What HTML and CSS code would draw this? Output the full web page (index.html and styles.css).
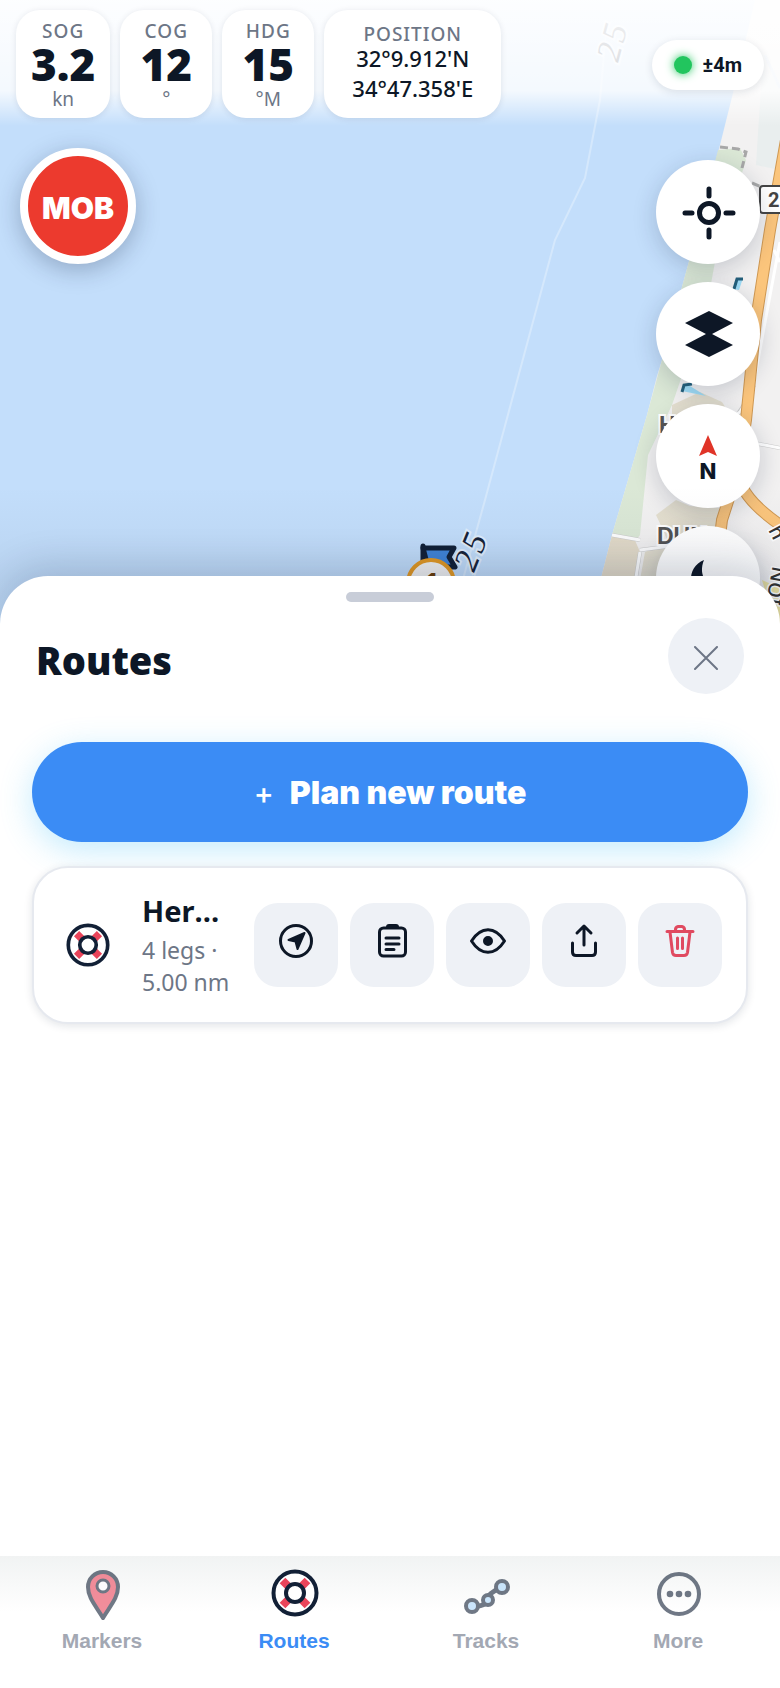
FILE: index.html
```html
<!DOCTYPE html>
<html lang="en">
<head>
<meta charset="utf-8">
<meta name="viewport" content="width=device-width, initial-scale=1">
<title>Routes</title>
<link rel="stylesheet" href="styles.css">
</head>
<body>
<svg class="defs" aria-hidden="true">
  <symbol id="ring" viewBox="0 0 48 48">
    <circle cx="24" cy="24" r="21" fill="#fff"/>
    <path d="M11.500 11.500 36.500 36.500M36.500 11.500 11.500 36.500" stroke="#ea445a" stroke-width="8"/>
    <circle cx="24" cy="24" r="21.500" fill="none" stroke="#122036" stroke-width="4"/>
    <circle cx="24" cy="24" r="9" fill="#fff" stroke="#122036" stroke-width="4"/>
  </symbol>
</svg>
<div class="app">
  <main class="stage">
    <svg class="map" viewBox="0 0 780 660" preserveAspectRatio="xMaxYMin slice" aria-hidden="true">
      <rect width="780" height="660" fill="#c3defb"/>
      <path d="M606 30 600 100 585 178 555 240 485 500 460 590" fill="none" stroke="#d5e8fc" stroke-width="2"/>
      <path d="M755 0 733 93 720 145 688 265 662 360 657 376 647 415 612 535 598 590 590 660H780V0Z" fill="#f2f1f1"/>
      <path d="M762 70H780V170L756 165Z" fill="#e9eeee"/>
      <path d="M718 150 740 148 746 160 715 262 708 300 672 405 648 455 640 535 632 545 612 535 647 415 662 360 688 265Z" fill="#dbe8d6"/>
      <path d="M612 535 634 538 640 552 636 590H598Z" fill="#e4dcca"/>
      <path d="M672 405 700 392 722 402 740 430 700 460 672 440Z" fill="#e4dfcf"/>
      <path d="M676 500 690 506 719 508 716 580H640L645 552 668 543 664 532 656 515Z" fill="#e4dfcf"/>
      <path d="M720 147 738 149 746 152 742 168M752 183 764 188" fill="none" stroke="#a8a8a8" stroke-width="3" stroke-dasharray="8 4"/>
      <path d="M765 55 780 88" stroke="#d8e5f5" stroke-width="3"/>
      <path d="M754 385 742 408 730 425M754 443 780 448M640 550 716 540M612 535 640 540M640 552 634 590" fill="none" stroke="#ccc" stroke-width="4"/>
      <path d="M780 242 752 392 740 412 718 425M754 443 780 448M640 550 716 540M612 535 640 540M640 552 634 590M774 250 780 262" fill="none" stroke="#fff" stroke-width="3"/>
      <path d="M786 140 770 230 756 320 746 420 738 470 722 520 712 600M742 486Q752 508 794 534" fill="none" stroke="#cf9852" stroke-width="12"/>
      <path d="M786 140 770 230 756 320 746 420 738 470 722 520 712 600M742 486Q752 508 794 534" fill="none" stroke="#fbc57c" stroke-width="10"/>
      <path d="M736 279 743 278 739 290 733 289Z" fill="#9fdcf6"/>
      <path d="M734 289 737 279 743 279" fill="none" stroke="#24607c" stroke-width="3"/>
      <path d="M684 384 690 386 706 396 682 391Z" fill="#9fdcf6"/>
      <path d="M682 392 684 385 692 384" fill="none" stroke="#24607c" stroke-width="3"/>
      <path d="M762 580 780 588V640Z" fill="#efe6a5"/>
      <g><rect x="760" y="186" width="34" height="27" rx="3" fill="#fff" stroke="#444" stroke-width="2"/><text x="768" y="207" class="road-no">2</text></g>
      <text class="place" x="659" y="433">Herzliya</text>
      <text class="place" x="657" y="544">DUN</text>
      <text class="street" transform="translate(768 530) rotate(62)">h</text>
      <text class="street" transform="translate(780 606) rotate(-80)">ION</text>
      <text class="depth" transform="translate(618 63) rotate(-75)">25</text>
      <text class="depth" transform="translate(474 573) rotate(-68)">25</text>
      <path d="M423 548H454L449 557 455 567H428Z" fill="#4185d9" stroke="#122036" stroke-width="5" stroke-linejoin="round"/>
      <path d="M423 546V590" stroke="#122036" stroke-width="5" stroke-linecap="round"/>
      <circle cx="431" cy="583" r="23" fill="#f3f3f3" stroke="#e59a22" stroke-width="4"/>
      <text class="stop" x="424" y="592">1</text>
    </svg>
    <div class="veil"></div>
    <div class="shade"></div>
    <header class="topbar">
      <dl class="readouts">
        <div class="chip"><dt>SOG</dt><dd class="value">3.2</dd><dd class="unit">kn</dd></div>
        <div class="chip"><dt>COG</dt><dd class="value">12</dd><dd class="unit">°</dd></div>
        <div class="chip"><dt>HDG</dt><dd class="value">15</dd><dd class="unit">°M</dd></div>
        <div class="chip position"><dt>POSITION</dt><dd class="coord">32°9.912'N</dd><dd class="coord">34°47.358'E</dd></div>
      </dl>
      <div class="gps"><span class="dot"></span>±4m</div>
    </header>
    <div class="controls">
      <button class="mob" type="button">MOB</button>
      <div class="tools">
        <button class="tool" type="button" aria-label="Center on my position">
          <svg width="56" height="56" viewBox="0 0 56 56" fill="none" stroke="#0d1726" stroke-width="5" stroke-linecap="round"><circle cx="29" cy="29" r="9.500"/><path d="M29 5V12M29 46V53M5 29H12M46 29H53"/></svg>
        </button>
        <button class="tool" type="button" aria-label="Layers">
          <svg width="56" height="56" viewBox="0 0 56 56" fill="#0d1726"><path d="M29 5 53 17 32 28 53 39 29 51 5 39 26 28 5 17Z"/></svg>
        </button>
        <button class="tool north" type="button">
          <svg width="18" height="22" viewBox="0 0 18 22" fill="#e03428" aria-hidden="true"><path d="M9 0 18 21 9 17 0 21Z"/></svg>N
        </button>
        <button class="tool" type="button" aria-label="Night mode">
          <svg width="56" height="56" viewBox="0 0 56 56" fill="#0d1726"><path d="M24 10C6 17 6 44 28 48 38 49 44 44 47 37 29 41 17 27 24 10Z"/></svg>
        </button>
      </div>
    </div>
  </main>

  <section class="sheet" aria-labelledby="sheet-title">
    <div class="handle"></div>
    <div class="sheet-head">
      <h1 id="sheet-title">Routes</h1>
      <button class="close" type="button" aria-label="Close">
        <svg width="24" height="24" viewBox="0 0 24 24" stroke="#6d7686" stroke-width="2" stroke-linecap="round"><path d="M1 1 23 23M23 1 1 23"/></svg>
      </button>
    </div>
    <button class="plan" type="button"><span class="plus">+</span>Plan new route</button>
    <article class="route">
      <svg class="route-icon" width="44" height="44" aria-hidden="true"><use href="#ring"/></svg>
      <div class="route-text">
        <h2>Herzliya Marina loop</h2>
        <p>4 legs · 5.00 nm</p>
      </div>
      <div class="actions">
        <button type="button" aria-label="Navigate"><svg viewBox="0 0 40 40"><circle cx="20" cy="20" r="15.500"/><path class="solid" d="M28.500 12 21.500 28 19.500 20.500 12.500 19Z"/></svg></button>
        <button type="button" aria-label="Details"><svg viewBox="0 0 40 40"><rect x="7.500" y="7" width="26" height="28" rx="4"/><path class="solid" d="M15 7V6Q15 4 17 4H24Q26 4 26 6V7Z"/><path d="M14 17H27M14 23H27M14 28.500H22"/></svg></button>
        <button type="button" aria-label="Show on map"><svg viewBox="0 0 40 40"><path d="M3.500 20C13 5 27 5 36.500 20 27 35 13 35 3.500 20Z"/><circle class="solid" cx="20" cy="20" r="4"/></svg></button>
        <button type="button" aria-label="Share"><svg viewBox="0 0 40 40"><path d="M20 24V6M13 12 20 5 27 12M8.500 22V31Q8.500 34.500 12 34.500H28Q31.500 34.500 31.500 31V22"/></svg></button>
        <button class="danger" type="button" aria-label="Delete"><svg viewBox="0 0 40 40"><path d="M7 10.500H33M10 11 12.500 31.500Q13 34.500 16 34.500H24Q27 34.500 27.500 31.500L30 11M15.500 10Q15 6 18 5.500H22Q25 6 24.500 10M17.500 17V27.500M22.500 17V27.500"/></svg></button>
      </div>
    </article>
  </section>

  <nav class="tabs">
    <a href="#markers"><svg class="muted" width="52" height="52" viewBox="0 0 52 52"><path d="M27 50C20 38 12 30 12 19A15 15 0 0 1 42 19C42 30 34 38 27 50Z" fill="#ea445a" stroke="#122036" stroke-width="4" stroke-linejoin="round"/><circle cx="27" cy="18" r="6" fill="#fff" stroke="#122036" stroke-width="3"/></svg>Markers</a>
    <a class="active" href="#routes" aria-current="page"><svg width="52" height="52" viewBox="-3 -1 52 52"><use href="#ring" width="48" height="48"/></svg>Routes</a>
    <a href="#tracks"><svg class="muted" width="52" height="52" viewBox="0 0 52 52" fill="#a9d6fb" stroke="#122036" stroke-width="4"><path d="M12 38Q26 39 27 32T42 19" fill="none" stroke-width="5"/><circle cx="12" cy="38" r="6"/><circle cx="28" cy="32" r="5"/><circle cx="42" cy="19" r="6"/></svg>Tracks</a>
    <a href="#more"><svg class="muted" width="52" height="52" viewBox="0 0 52 52" fill="none" stroke="#122036" stroke-width="4"><circle cx="27" cy="26" r="20"/><g fill="#122036" stroke="none"><circle cx="18" cy="26" r="3.300"/><circle cx="27" cy="26" r="3.300"/><circle cx="36" cy="26" r="3.300"/></g></svg>More</a>
  </nav>
</div>
</body>
</html>
```
FILE: styles.css
```css
* { box-sizing: border-box; }
body { margin: 0; font-family: "Noto Sans", "Open Sans", sans-serif; color: #0d1726; background: #fff; }
button { border: 0; padding: 0; font: inherit; color: inherit; cursor: pointer; }
h1, h2, p, dl, dd { margin: 0; }
.defs { position: absolute; width: 0; height: 0; }
.app { display: flex; flex-direction: column; height: 100vh; overflow: hidden; }

.stage { position: relative; flex: 1; min-height: 0; }
.map { position: absolute; top: 0; left: 0; width: 100%; height: 660px; }
.veil { position: absolute; top: 0; left: 0; right: 0; height: 126px; background: linear-gradient(rgba(255,255,255,.96), rgba(255,255,255,.82) 72%, rgba(255,255,255,0)); }
.shade { position: absolute; z-index: 2; left: 0; right: 0; bottom: -60px; height: 150px; pointer-events: none; background: linear-gradient(rgba(13,30,60,0), rgba(13,30,60,.05) 60%); }
.place { font: 700 23px "Liberation Sans", sans-serif; fill: #555; stroke: #fff; stroke-width: 4px; paint-order: stroke; }
.street { font: 500 20px "Noto Sans", sans-serif; fill: #333; stroke: #fff; stroke-width: 3px; paint-order: stroke; }
.road-no { font: 700 20px Roboto, sans-serif; fill: #444; }
.depth { font: italic 34px "Liberation Serif", serif; fill: #172338; stroke: #e0effd; stroke-width: 4px; paint-order: stroke; letter-spacing: 3px; }
.stop { font: 800 26px "Noto Sans", sans-serif; fill: #6b3c08; }

.topbar { position: relative; display: flex; justify-content: space-between; align-items: flex-start; padding: 10px 16px 0; }
.readouts { display: flex; gap: 10px; }
.chip { display: flex; flex-direction: column; align-items: center; justify-content: center; min-width: 92px; height: 108px; padding: 4px 15px 0; border-radius: 24px; background: #fff; box-shadow: 0 1px 6px rgba(13,30,60,.1); text-align: center; }
.chip dt { font-size: 19px; line-height: 22px; font-weight: 500; letter-spacing: 1px; color: #6d7686; }
.value { font-size: 44px; line-height: 44px; font-weight: 900; }
.unit { font-size: 19px; line-height: 26px; color: #6d7686; }
.chip.position { padding: 0 28px; }
.coord { font-size: 22px; line-height: 30px; font-weight: 500; }
.position dt { line-height: 18px; }
.gps { display: flex; align-items: center; gap: 10px; margin-top: 30px; height: 50px; padding: 0 22px; border-radius: 25px; background: #fff; box-shadow: 0 2px 8px rgba(13,30,60,.12); font: 700 20px Roboto, sans-serif; }
.dot { width: 18px; height: 18px; border-radius: 50%; background: #22c55e; box-shadow: 0 0 10px #22c55e; }

.controls { position: relative; display: flex; justify-content: space-between; align-items: flex-start; padding: 30px 20px 0; }
.mob { width: 116px; height: 116px; padding-top: 4px; border: 8px solid #fff; border-radius: 50%; background: #ec3a2e; color: #fff; font: 900 30px Inter, sans-serif; box-shadow: 0 6px 24px rgba(13,30,60,.28); }
.tools { display: flex; flex-direction: column; gap: 18px; padding-top: 12px; }
.tool { display: flex; align-items: center; justify-content: center; width: 104px; height: 104px; border-radius: 50%; background: #fff; box-shadow: 0 6px 24px rgba(13,30,60,.2); }
.north { flex-direction: column; gap: 0; padding-top: 8px; font: 800 22px/28px Inter, sans-serif; }

.sheet { position: relative; z-index: 3; flex: 0 0 calc(58vh + 1px); padding: 16px 32px; border-radius: 48px 48px 0 0; background: #fff; box-shadow: 0 -8px 40px rgba(13,30,60,.18); }
.handle { width: 88px; height: 10px; margin: 0 auto; border-radius: 5px; background: #c8cdd8; }
.sheet-head { display: flex; align-items: center; justify-content: space-between; padding: 16px 4px 48px; }
.sheet-head h1 { font-size: 38px; line-height: 52px; padding-top: 8px; font-weight: 900; }
.close { display: flex; align-items: center; justify-content: center; width: 76px; height: 76px; padding-top: 4px; border-radius: 50%; background: #eef1f6; }
.plan { display: flex; align-items: center; justify-content: center; gap: 16px; width: 100%; height: 100px; padding-top: 2px; border-radius: 50px; background: #3b8cf5; color: #fff; font: 900 32px Inter, sans-serif; box-shadow: 0 8px 32px rgba(56,189,248,.3); }
.plus { font-size: 30px; font-weight: 500; }
.route { display: flex; align-items: center; margin-top: 24px; padding: 24px; border: 2px solid #e6e9ef; border-radius: 36px; background: #fff; box-shadow: 0 2px 8px rgba(13,30,60,.12); }
.route-icon { flex: none; margin: 0 32px 0 8px; }
.route-text { flex: 1; min-width: 0; margin-right: 16px; }
.route h2 { padding-right: 8px; font-size: 29px; line-height: 38px; font-weight: 700; overflow: hidden; white-space: nowrap; text-overflow: ellipsis; }
.route p { margin-top: 4px; font-size: 23px; line-height: 32px; color: #6d7686; }
.actions { display: flex; flex: none; gap: 12px; }
.actions button { display: flex; align-items: center; justify-content: center; width: 84px; height: 84px; padding-bottom: 8px; border-radius: 24px; background: #eef1f6; }
.actions svg { width: 40px; height: 40px; fill: none; stroke: #0d1726; stroke-width: 3px; stroke-linecap: round; stroke-linejoin: round; }
.actions .solid { fill: #0d1726; stroke-width: 2px; }
.actions .danger svg { stroke: #e04a60; }

.tabs { position: relative; z-index: 4; display: grid; grid-template-columns: repeat(4, 1fr); flex: none; height: 132px; padding: 12px 6px; background: linear-gradient(#f1f3f3, #fff 56px); }
.tabs a { display: flex; flex-direction: column; align-items: center; gap: 8px; color: #a3a8b3; font: 700 21px/26px "Liberation Sans", sans-serif; text-decoration: none; }
.tabs .active { color: #3b8cf5; }
.muted { opacity: .6; }
```
